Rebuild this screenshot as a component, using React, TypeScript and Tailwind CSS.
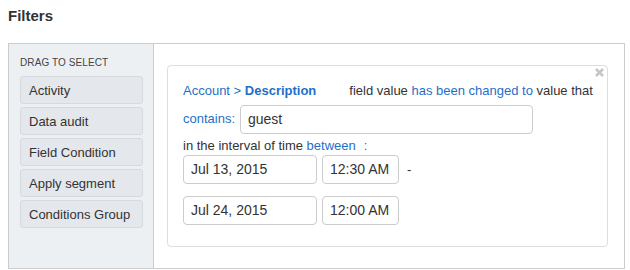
import React from "react";

const items = ["Activity", "Data audit", "Field Condition", "Apply segment", "Conditions Group"];

export default function App() {
  return (
    <div
      className="w-[630px] h-[270px] bg-white overflow-hidden text-[#333]"
      style={{ fontFamily: '"Liberation Sans", Arial, sans-serif' }}
    >
      <div className="pl-[8px] pt-[7px] h-[43px] text-[15px] font-bold leading-[18px] text-[#333]">Filters</div>
      <div className="ml-[8px] w-[617px] h-[226px] border border-[#cccccc] flex">
        <div className="w-[145px] shrink-0 bg-[#edf0f3] border-r border-[#cccccc] pl-[11px] pt-[12px]">
          <div className="text-[10px] leading-[14px] text-[#444] tracking-[0.1px]">DRAG TO SELECT</div>
          <div className="mt-[6px] flex flex-col gap-[3px]">
            {items.map((t) => (
              <div
                key={t}
                className="w-[123px] h-[28px] bg-[#e4e7eb] border border-[#d6dadf] rounded-[3px] pl-[8px] pt-[1px] flex items-center text-[13px] text-[#333]"
              >
                {t}
              </div>
            ))}
          </div>
        </div>
        <div className="flex-1 pl-[13px] pt-[21px]">
          <div className="relative w-[441px] h-[182px] border border-[#dddddd] rounded-[4px] pl-[15px] pt-[15px]">
            <svg
              className="absolute right-[3px] top-[2px]"
              width="9"
              height="9"
              viewBox="0 0 9 9"
            >
              <path d="M1 1 L8 8 M8 1 L1 8" stroke="#c6c6c6" strokeWidth="2.6" strokeLinecap="butt" />
            </svg>
            <div className="h-[19px] flex items-center text-[13px] whitespace-nowrap">
              <span className="text-[#1e6fc8]">Account &gt; </span>
              <span className="text-[#1e6fc8] font-bold">&nbsp;Description</span>
              <span className="ml-[33px] text-[#333]">field value&nbsp;</span>
              <span className="text-[#1e6fc8]">has been changed to</span>
              <span className="text-[#333]">&nbsp;value that</span>
            </div>
            <div className="mt-[5px] flex items-center">
              <span className="text-[13px] text-[#1e6fc8] w-[57px] -mt-[2px]">contains:</span>
              <div className="w-[293px] h-[29px] border border-[#cccccc] rounded-[4px] pl-[7px] flex items-center text-[14px] text-[#333]">
                guest
              </div>
            </div>
            <div className="h-[21px] pt-[2px] flex items-center text-[13px] whitespace-nowrap">
              <span className="text-[#333]">in the interval of time&nbsp;</span>
              <span className="text-[#1e6fc8]">between</span>
              <span className="text-[#1e6fc8] ml-[8px]">:</span>
            </div>
            <div className="flex items-center">
              <div className="w-[134px] h-[29px] border border-[#cccccc] rounded-[4px] pl-[7px] flex items-center text-[14px] text-[#333]">
                Jul 13, 2015
              </div>
              <div className="ml-[5px] w-[77px] h-[29px] border border-[#cccccc] rounded-[4px] pl-[7px] flex items-center text-[14px] text-[#333]">
                12:30 AM
              </div>
              <span className="ml-[8px] text-[13px] text-[#333]">-</span>
            </div>
            <div className="mt-[12px] flex items-center">
              <div className="w-[134px] h-[29px] border border-[#cccccc] rounded-[4px] pl-[7px] flex items-center text-[14px] text-[#333]">
                Jul 24, 2015
              </div>
              <div className="ml-[5px] w-[77px] h-[29px] border border-[#cccccc] rounded-[4px] pl-[7px] flex items-center text-[14px] text-[#333]">
                12:00 AM
              </div>
            </div>
          </div>
        </div>
      </div>
    </div>
  );
}
